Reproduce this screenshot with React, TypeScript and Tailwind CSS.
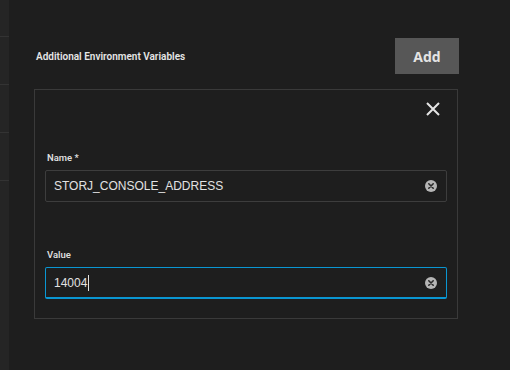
import React from "react";

function ClearIcon() {
  return (
    <svg width="12" height="12" viewBox="0 0 12 12" className="shrink-0">
      <circle cx="6" cy="6" r="6" fill="#b5b5b5" />
      <path d="M3.8 3.8 L8.2 8.2 M8.2 3.8 L3.8 8.2" stroke="#2a2a2a" strokeWidth="1.6" strokeLinecap="round" />
    </svg>
  );
}

function Field({ label, value, focused }: { label: string; value: string; focused?: boolean }) {
  return (
    <div className="flex flex-col">
      <div className="h-[12px] leading-[12px] text-[9.5px] font-semibold text-[#dcdcdc] pl-[2px]" style={{ fontFamily: "Roboto, 'Liberation Sans', sans-serif" }}>
        {label}
      </div>
      <div
        className={
          focused
            ? "mt-[6px] h-[32px] rounded-[2px] border border-b-2 border-[#0a96d2] flex items-center pl-[8px] pr-[9px]"
            : "mt-[6px] h-[32px] rounded-[2px] border border-[#3d3d3d] flex items-center pl-[8px] pr-[9px]"
        }
      >
        <div className="flex-1 flex items-center text-[12px] text-[#e2e2e2]" style={{ fontFamily: "'Liberation Sans', Arial, sans-serif" }}>
          <span>{value}</span>
          {focused && <span className="ml-[1px] w-[1px] h-[16px] bg-[#e2e2e2]" />}
        </div>
        <ClearIcon />
      </div>
    </div>
  );
}

export default function App() {
  return (
    <div className="w-[510px] h-[370px] bg-[#1e1e1e] flex overflow-hidden">
      <div className="w-[9px] bg-[#252525] flex flex-col">
        <div className="h-[37px] border-b border-[#333333]" />
        <div className="h-[48px] border-b border-[#333333]" />
        <div className="h-[48px] border-b border-[#333333]" />
        <div className="h-[48px] border-b border-[#333333]" />
      </div>
      <div className="flex-1 pl-[25px] pt-[38px]">
        <div className="w-[425px] h-[36px] flex items-center justify-between">
          <div className="pl-[2px] text-[10px] font-semibold text-[#e6e6e6]" style={{ fontFamily: "Roboto, 'Liberation Sans', sans-serif" }}>
            Additional Environment Variables
          </div>
          <div className="w-[64px] h-[36px] bg-[#575757] flex items-center justify-center text-[14px] font-bold text-[#e4e4e4]" style={{ fontFamily: "'Open Sans', 'Liberation Sans', sans-serif" }}>
            Add
          </div>
        </div>
        <div className="mt-[15px] w-[424px] h-[230px] border border-[#3a3a3a] flex flex-col px-[10px]">
          <div className="flex justify-end pt-[12px] pr-[7px]">
            <svg width="14" height="14" viewBox="0 0 14 14">
              <path d="M1 1 L13 13 M13 1 L1 13" stroke="#e4e4e4" strokeWidth="2" />
            </svg>
          </div>
          <div className="mt-[36px]">
            <Field label="Name *" value="STORJ_CONSOLE_ADDRESS" />
          </div>
          <div className="mt-[47px]">
            <Field label="Value" value="14004" focused />
          </div>
        </div>
      </div>
    </div>
  );
}
